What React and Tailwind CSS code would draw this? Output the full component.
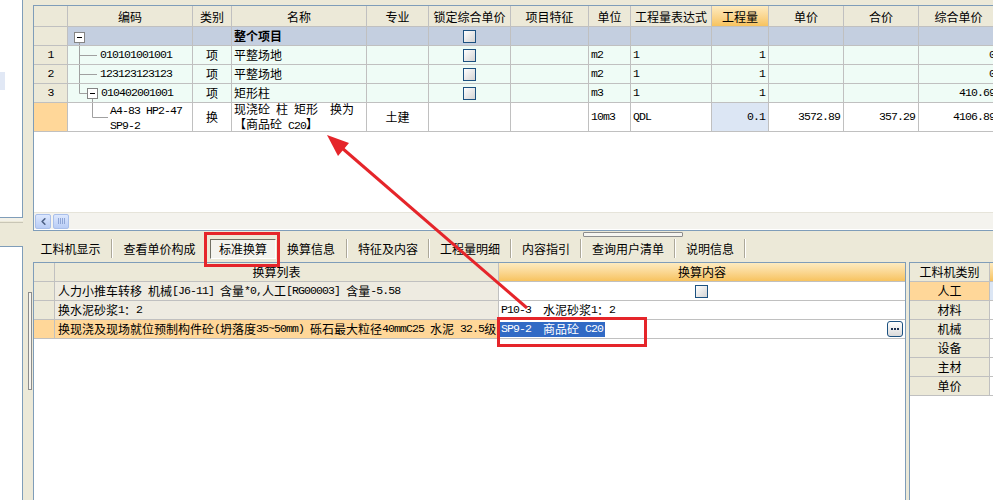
import React from "react";
import { ChevronLeft } from "lucide-react";

// split text into CJK runs and latin runs (latin in mono, half width like SimSun)
const CJK = /[\u2E80-\u9FFF\u3000-\u303F\uFF00-\uFFEF]/;
const T = ({ s }) => (
  <>
    {s.split(/([\u2E80-\u9FFF\u3000-\u303F\uFF00-\uFFEF]+)/).map((p, i) =>
      !p ? null : CJK.test(p) ? (
        <span key={i}>{p}</span>
      ) : (
        <span key={i} className="font-['Liberation_Mono',monospace] text-[11.5px] tracking-[-0.9px]">
          {p}
        </span>
      )
    )}
  </>
);

const Check = () => (
  <span className="inline-block w-[13px] h-[13px] border border-[#1C5180] bg-linear-to-br from-white to-[#D4D4D4]" />
);

const Box = ({ x, y }) => (
  <>
    <rect x={x + 0.5} y={y + 0.5} width="10" height="10" fill="white" stroke="#848484" />
    <line x1={x + 3} y1={y + 5.5} x2={x + 8} y2={y + 5.5} stroke="#000" />
  </>
);

const Tree0 = () => (
  <svg width="30" height="19" className="shrink-0">
    <line x1="9.5" y1="15" x2="9.5" y2="19" stroke="#A0A0A0" />
    <Box x={4} y={5} />
  </svg>
);
const Tree1 = () => (
  <svg width="30" height="19" className="shrink-0">
    <line x1="9.5" y1="0" x2="9.5" y2="19" stroke="#A0A0A0" />
    <line x1="9.5" y1="9.5" x2="27" y2="9.5" stroke="#A0A0A0" />
  </svg>
);
const Tree3 = () => (
  <svg width="31" height="19" className="shrink-0">
    <line x1="9.5" y1="0" x2="9.5" y2="9.5" stroke="#A0A0A0" />
    <line x1="9.5" y1="9.5" x2="17" y2="9.5" stroke="#A0A0A0" />
    <line x1="22.5" y1="14" x2="22.5" y2="19" stroke="#A0A0A0" />
    <Box x={17} y={4} />
  </svg>
);
const Tree4 = () => (
  <svg width="40" height="28" className="shrink-0">
    <line x1="22.5" y1="0" x2="22.5" y2="14.5" stroke="#A0A0A0" />
    <line x1="22.5" y1="14.5" x2="38" y2="14.5" stroke="#A0A0A0" />
  </svg>
);

const W = [
  "w-[34px]",
  "w-[125px]",
  "w-[39px]",
  "w-[135px]",
  "w-[62px]",
  "w-[82px]",
  "w-[78px]",
  "w-[42px]",
  "w-[81px]",
  "w-[57px]",
  "w-[75px]",
  "w-[75px]",
  "w-[80px]",
];
const HEAD = ["", "编码", "类别", "名称", "专业", "锁定综合单价", "项目特征", "单位", "工程量表达式", "工程量", "单价", "合价", "综合单价"];

const C = "shrink-0 h-full border-r border-b border-[#C0C0C0] flex items-center overflow-hidden whitespace-pre";
const L = "pl-[2px]";
const M = "justify-center";
const R = "justify-end pr-[3px]";

const Row = ({ h, bg, cells }) => (
  <div className={`flex ${h}`}>
    {cells.map((c, i) => (
      <div key={i} className={`${C} ${W[i]} ${c.b || bg} ${c.a || L}`}>
        {typeof c.c === "string" ? <T s={c.c} /> : c.c}
      </div>
    ))}
  </div>
);

const num = (n) => ({ c: n, a: M, b: "bg-[#ECE9D8]" });
const e = { c: "" };

const rows = [
  {
    h: "h-[19px]",
    bg: "bg-[#C4CFE0]",
    cells: [num(""), { c: <Tree0 />, a: "" }, e, { c: <span className="font-bold">整个项目</span> }, e, { c: <Check />, a: M }, e, e, e, e, e, e, e],
  },
  {
    h: "h-[19px]",
    bg: "bg-[#EFFCF6]",
    cells: [num("1"), { c: <><Tree1 /><T s="010101001001" /></>, a: "" }, { c: "项", a: M }, { c: "平整场地" }, e, { c: <Check />, a: M }, e, { c: "m2" }, { c: "1" }, { c: "1", a: R }, e, e, { c: "0", a: R }],
  },
  {
    h: "h-[19px]",
    bg: "bg-[#EFFCF6]",
    cells: [num("2"), { c: <><Tree1 /><T s="123123123123" /></>, a: "" }, { c: "项", a: M }, { c: "平整场地" }, e, { c: <Check />, a: M }, e, { c: "m2" }, { c: "1" }, { c: "1", a: R }, e, e, { c: "0", a: R }],
  },
  {
    h: "h-[19px]",
    bg: "bg-[#EFFCF6]",
    cells: [num("3"), { c: <><Tree3 /><T s="010402001001" /></>, a: "" }, { c: "项", a: M }, { c: "矩形柱" }, e, { c: <Check />, a: M }, e, { c: "m3" }, { c: "1" }, { c: "1", a: R }, e, e, { c: "410.69", a: R }],
  },
  {
    h: "h-[29px]",
    bg: "bg-white",
    cells: [
      { c: "", b: "bg-[#FFD799]" },
      {
        c: (
          <>
            <Tree4 />
            <div className="leading-[13px]">
              <div><T s="A4-83 HP2-47" /></div>
              <div><T s="SP9-2" /></div>
            </div>
          </>
        ),
        a: "",
      },
      { c: "换", a: M },
      {
        c: (
          <div className="leading-[13px]">
            <div><T s="现浇砼 柱 矩形  换为" /></div>
            <div><T s="【商品砼 C20】" /></div>
          </div>
        ),
      },
      { c: "土建", a: M },
      e,
      e,
      { c: "10m3" },
      { c: "QDL" },
      { c: "0.1", a: R, b: "bg-[#DCE6F4]" },
      { c: "3572.89", a: R },
      { c: "357.29", a: R },
      { c: "4106.89", a: R },
    ],
  },
];

const Sep = () => <div className="shrink-0 w-[2px] h-[19px] border-l border-[#ACA899] border-r border-r-white" />;
const Tab = ({ w, t }) => <div className={`shrink-0 ${w} flex justify-center`}>{t}</div>;

const TopGrid = () => (
  <div className="w-[980px] h-[226px] border border-[#7F9DB9] bg-white flex flex-col">
    <div className="flex h-[21px]">
      {HEAD.map((h, i) => (
        <div
          key={i}
          className={`${C} ${W[i]} justify-center pt-[1px] ${
            i === 9 ? "bg-linear-to-b from-[#FDEBC0] to-[#F7C35E]" : "bg-[#ECE9D8]"
          }`}
        >
          {h}
        </div>
      ))}
    </div>
    {rows.map((r, i) => (
      <Row key={i} {...r} />
    ))}
    <div className="flex-1" />
    <div className="h-[17px] mb-[1px] bg-[#F4F3EE] border-t border-[#E6E4DA] flex items-center gap-[2px] pl-[1px]">
      <div className="w-[16px] h-[15px] rounded-[2px] border border-[#A9BFEA] bg-linear-to-b from-[#DDE8FE] to-[#B8CCF5] flex items-center justify-center">
        <ChevronLeft size={11} strokeWidth={3.5} color="#4D6185" />
      </div>
      <div className="w-[16px] h-[15px] rounded-[2px] border border-[#A9BFEA] bg-linear-to-b from-[#DDE8FE] to-[#B8CCF5] flex items-center justify-center gap-[1px]">
        <span className="w-px h-[6px] bg-[#8FA6D6]" />
        <span className="w-px h-[6px] bg-[#8FA6D6]" />
        <span className="w-px h-[6px] bg-[#8FA6D6]" />
        <span className="w-px h-[6px] bg-[#8FA6D6]" />
      </div>
    </div>
  </div>
);

const BC = "shrink-0 h-full border-b border-[#C0C0C0] flex items-center overflow-hidden whitespace-pre";

const BottomGrid = () => (
  <div className="w-[873px] h-full border-l border-t border-r border-[#7F9DB9] bg-white flex flex-col">
    <div className="flex h-[19px]">
      <div className={`${BC} w-[21px] border-r bg-[#ECE9D8]`} />
      <div className={`${BC} w-[444px] border-r bg-[#ECE9D8] justify-center`}>换算列表</div>
      <div className={`${BC} w-[406px] justify-center bg-linear-to-b from-[#FDEBC0] to-[#F7C35E]`}>换算内容</div>
    </div>
    <div className="flex h-[19px]">
      <div className={`${BC} w-[21px] border-r bg-[#ECE9D8]`} />
      <div className={`${BC} w-[444px] border-r bg-[#EEEBE1] pl-[3px]`}>
        <T s="人力小推车转移 机械[J6-11] 含量*0,人工[RG00003] 含量-5.58" />
      </div>
      <div className={`${BC} w-[406px] justify-center pr-[1px]`}>
        <Check />
      </div>
    </div>
    <div className="flex h-[19px]">
      <div className={`${BC} w-[21px] border-r bg-[#ECE9D8]`} />
      <div className={`${BC} w-[444px] border-r bg-[#EEEBE1] pl-[3px]`}>
        <T s="换水泥砂浆1：2" />
      </div>
      <div className={`${BC} w-[406px] pl-[2px]`}>
        <T s="P10-3  水泥砂浆1：2" />
      </div>
    </div>
    <div className="flex h-[19px]">
      <div className={`${BC} w-[21px] border-r bg-[#FFD799]`} />
      <div className={`${BC} w-[444px] border-r bg-[#FFD799] pl-[3px]`}>
        <T s="换现浇及现场就位预制构件砼(坍落度35~50mm) 砾石最大粒径40mmC25 水泥 32.5级" />
      </div>
      <div className={`${BC} w-[406px] pl-[1px] justify-between pr-[2px]`}>
        <span className="bg-[#316AC5] text-white h-[15px] flex items-center pl-[1px] pr-[2px]">
          <T s="SP9-2  商品砼 C20" />
        </span>
        <div className="w-[16px] h-[16px] rounded-[3px] border border-[#1C5180] bg-linear-to-b from-white to-[#DADADA] flex items-center justify-center gap-[1px]">
          <span className="w-[2px] h-[2px] bg-[#1C3050]" />
          <span className="w-[2px] h-[2px] bg-[#1C3050]" />
          <span className="w-[2px] h-[2px] bg-[#1C3050]" />
        </div>
      </div>
    </div>
  </div>
);

const cats = ["人工", "材料", "机械", "设备", "主材", "单价"];

const RightPanel = () => (
  <div className="flex-1 h-full border-l border-t border-[#7F9DB9] bg-white flex flex-col">
    <div className="flex h-[19px]">
      <div className={`${BC} w-[80px] border-r bg-[#ECE9D8] justify-center`}>工料机类别</div>
      <div className={`${BC} flex-1 bg-linear-to-b from-[#FDEBC0] to-[#F7C35E]`} />
    </div>
    {cats.map((c, i) => (
      <div key={c} className="flex h-[19px]">
        <div className={`${BC} w-[80px] border-r justify-center ${i === 0 ? "bg-[#FFD799]" : "bg-[#ECE9D8]"}`}>{c}</div>
        <div className={`${BC} flex-1 ${i === 0 ? "bg-[#DCE6F4]" : "bg-white"}`} />
      </div>
    ))}
  </div>
);

export default function App() {
  return (
    <div className="relative w-[993px] h-[500px] overflow-hidden bg-[#ECE9D8] text-[12px] leading-none text-black font-['Noto_Sans_CJK_SC',sans-serif]">
      <div className="flex h-full">
        {/* left strip */}
        <div className="w-[23px] shrink-0 flex flex-col">
          <div className="h-[218px] bg-white border-r border-b border-[#7F9DB9]">
            <div className="mt-[72px] w-[5px] h-[18px] bg-[#E1E8F5]" />
          </div>
          <div className="h-[28px] border-t-[3px] border-[#F3F1E8] pt-[1px]">
            <div className="h-px bg-[#C9C6B6]" />
          </div>
          <div className="flex-1 bg-white border-r border-t border-[#7F9DB9]" />
        </div>

        {/* main */}
        <div className="w-[970px] shrink-0 flex flex-col">
          <div className="h-[231px] pl-[10px] pt-[5px]">
            <TopGrid />
          </div>

          <div className="relative h-[31px] flex items-center pt-[4px] pl-[7px]">
            <div className="absolute left-[560px] top-[1px] w-[100px] h-[5px] border border-[#8C8C8C] rounded-[1px] bg-[#F6F5F0]" />
            <Tab w="w-[81px]" t="工料机显示" />
            <Sep />
            <Tab w="w-[93px]" t="查看单价构成" />
            <div className="w-[4px] shrink-0" />
            <div className="shrink-0 w-[66px] h-[20px] flex items-center justify-center border border-t-[#716F64] border-l-[#716F64] border-r-white border-b-white bg-[#F4F3EE]">
              标准换算
            </div>
            <Tab w="w-[70px]" t="换算信息" />
            <Sep />
            <Tab w="w-[80px]" t="特征及内容" />
            <Sep />
            <Tab w="w-[80px]" t="工程量明细" />
            <Sep />
            <Tab w="w-[68px]" t="内容指引" />
            <Sep />
            <Tab w="w-[92px]" t="查询用户清单" />
            <Sep />
            <Tab w="w-[68px]" t="说明信息" />
            <Sep />
          </div>

          <div className="flex h-[238px]">
            <div className="w-[10px] shrink-0 pt-[30px] pl-[5px]">
              <div className="w-[4px] h-[98px] border border-[#8C8C8C] bg-[#F6F5F0]" />
            </div>
            <BottomGrid />
            <div className="w-[3px] shrink-0" />
            <RightPanel />
          </div>
        </div>
      </div>

      {/* red annotations */}
      <svg className="absolute inset-0 pointer-events-none" width="993" height="500">
        <rect x="205.5" y="233.5" width="73" height="32" fill="none" stroke="#E5252A" strokeWidth="3" />
        <rect x="498.5" y="318.5" width="147" height="27" fill="none" stroke="#E5252A" strokeWidth="3" />
        <line x1="527" y1="308" x2="342" y2="148" stroke="#E5252A" strokeWidth="3" />
        <polygon points="327,135 349,143 338,156" fill="#E5252A" />
      </svg>
    </div>
  );
}
